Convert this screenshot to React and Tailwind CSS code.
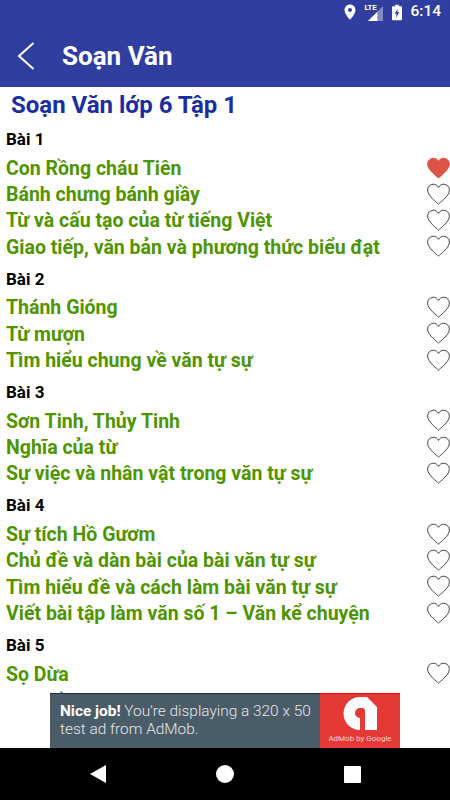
const sections = [
  { title: 'Bài 1', items: ['Con Rồng cháu Tiên', 'Bánh chưng bánh giầy', 'Từ và cấu tạo của từ tiếng Việt', 'Giao tiếp, văn bản và phương thức biểu đạt'] },
  { title: 'Bài 2', items: ['Thánh Gióng', 'Từ mượn', 'Tìm hiểu chung về văn tự sự'] },
  { title: 'Bài 3', items: ['Sơn Tinh, Thủy Tinh', 'Nghĩa của từ', 'Sự việc và nhân vật trong văn tự sự'] },
  { title: 'Bài 4', items: ['Sự tích Hồ Gươm', 'Chủ đề và dàn bài của bài văn tự sự', 'Tìm hiểu đề và cách làm bài văn tự sự', 'Viết bài tập làm văn số 1 – Văn kể chuyện'] },
  { title: 'Bài 5', items: ['Sọ Dừa'] },
]

const heartPath = 'M12 21.5 C11 20.4 1.2 13.6 1.2 7.6 C1.2 4.2 3.9 1.8 6.9 1.8 C9 1.8 11 3 12 5 C13 3 15 1.8 17.1 1.8 C20.1 1.8 22.8 4.2 22.8 7.6 C22.8 13.6 13 20.4 12 21.5 Z'

function Heart({ filled }) {
  return (
    <svg viewBox="0.6 1 22.8 21" className="mb-[2px] h-[22px] w-[23px]">
      <path d={heartPath} fill={filled ? '#dd5347' : 'none'} stroke={filled ? '#dd5347' : '#333333'} strokeWidth="0.9" />
    </svg>
  )
}

function StatusBar() {
  return (
    <div className="flex h-[24px] items-center justify-end pr-[9px] text-white">
      <svg viewBox="0 0 12 16" className="h-[16px] w-[12px]">
        <path fillRule="evenodd" d="M6 0.5C2.9 0.5 0.5 2.9 0.5 6C0.5 10 6 15.8 6 15.8S11.5 10 11.5 6C11.5 2.9 9.1 0.5 6 0.5ZM6 4A2 2 0 1 1 6 8A2 2 0 1 1 6 4Z" fill="#fff" />
      </svg>
      <div className="relative ml-[8px] h-[17px] w-[19px]">
        <svg viewBox="0 0 16 16" className="absolute bottom-0 right-0 h-[15px] w-[15px]">
          <path d="M16 0V16H0Z" fill="#fff" fillOpacity="0.4" />
          <path d="M10 6V16H0Z" fill="#fff" />
        </svg>
        <span className="absolute left-0 top-[-1px] text-[8px] font-bold leading-[10px] tracking-[-0.3px] text-white">LTE</span>
      </div>
      <svg viewBox="0 0 11 17" className="ml-[9px] h-[17px] w-[10px]">
        <path fillRule="evenodd" d="M3.5 0H7.5V1.5H10A1 1 0 0 1 11 2.5V16A1 1 0 0 1 10 17H1A1 1 0 0 1 0 16V2.5A1 1 0 0 1 1 1.5H3.5ZM6.4 4L3 10H5L4.4 14.5L8 8H5.8Z" fill="#fff" />
      </svg>
      <span className="ml-[8px] text-[15.500px] font-medium leading-none">6:14</span>
    </div>
  )
}

export default function App() {
  return (
    <div className="flex h-[800px] w-[450px] flex-col overflow-hidden bg-white font-['Roboto',sans-serif]">
      <header className="h-[87px] shrink-0 bg-[#303f9f]">
        <StatusBar />
        <div className="flex h-[63px] items-center">
          <svg viewBox="0 0 18 28" className="ml-[17px] h-[28px] w-[18px]">
            <path d="M16.5 1L2 14L16.5 27" fill="none" stroke="#fff" strokeWidth="2" />
          </svg>
          <h1 className="ml-[27px] text-[26px] font-bold leading-none text-white">Soạn Văn</h1>
        </div>
      </header>

      <main className="min-h-0 flex-1 overflow-hidden">
        <h2 className="ml-[11px] mt-[3px] h-[31px] text-[24px] font-bold leading-[31px] text-[#1a2ea0]">Soạn Văn lớp 6 Tập 1</h2>
        <div className="pl-[6px]">
          {sections.map((section) => (
            <section key={section.title}>
              <div className="flex h-[34.4px] items-center pt-[3px] text-[17px] font-bold leading-none text-black">{section.title}</div>
              {section.items.map((item) => (
                <div key={item} className="flex h-[26.3px] items-center justify-between">
                  <span className="whitespace-nowrap text-[19.5px] font-bold leading-none text-[#4f9500]">{item}</span>
                  <Heart filled={item === 'Con Rồng cháu Tiên'} />
                </div>
              ))}
            </section>
          ))}
          <div className="flex h-[26.3px] items-center pt-[2px]">
            <span className="whitespace-nowrap text-[19.5px] font-bold leading-none text-[#4f9500]">Từ nhiều nghĩa và hiện tượng</span>
          </div>
        </div>
      </main>

      <div className="flex h-[55px] shrink-0 justify-center">
        <div className="flex w-[270px] items-center border-t border-[#1c2b45] bg-[#4a5c68] pb-[2px] pl-[10px] text-[15.4px] leading-[18px] text-[#e4e8ea]">
          <p className="whitespace-nowrap font-light"><span className="font-bold text-white">Nice job!</span> You're displaying a 320 x 50<br />test ad from AdMob.</p>
        </div>
        <div className="flex w-[80px] flex-col items-center border-t border-[#f01010] bg-[#e53935] text-white">
          <svg viewBox="0 0 34 33" className="mt-[3px] h-[33px] w-[34px]">
            <path d="M17 0H24L34 10V33H22V14A3 3 0 0 0 19 11H17A5 5 0 0 0 17 21V33A16.500 16.500 0 0 1 17 0Z" fill="#fff" />
          </svg>
          <span className="mt-[3px] whitespace-nowrap text-[8px] leading-[11px] text-[#fbd0ce]">AdMob by Google</span>
        </div>
      </div>

      <nav className="flex h-[52px] shrink-0 items-center justify-center gap-[110px] bg-black">
        <svg viewBox="0 0 16 18" className="h-[18px] w-[16px]">
          <path d="M16 0V18L0 9Z" fill="#fff" />
        </svg>
        <span className="h-[18px] w-[18px] rounded-full bg-white" />
        <span className="h-[17px] w-[17px] rounded-[1px] bg-white" />
      </nav>
    </div>
  )
}
